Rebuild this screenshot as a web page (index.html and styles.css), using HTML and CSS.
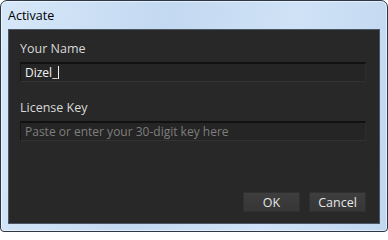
FILE: index.html
```html
<!DOCTYPE html>
<html>
<head>
<meta charset="utf-8">
<title>Activate</title>
<link rel="stylesheet" href="styles.css">
</head>
<body>
<div class="window">
  <div class="titlebar">Activate</div>
  <div class="panel">
    <div class="label">Your Name</div>
    <div class="field"><span class="value">Dizel_</span><span class="caret"></span></div>
    <div class="label label-second">License Key</div>
    <div class="field"><span class="placeholder">Paste or enter your 30-digit key here</span></div>
    <div class="actions">
      <button class="btn">OK</button>
      <button class="btn">Cancel</button>
    </div>
  </div>
</div>
</body>
</html>
```
FILE: styles.css
```css
html, body {
  margin: 0;
  padding: 0;
  background: #ffffff;
}
body {
  font-family: "Open Sans", "Noto Sans", sans-serif;
  font-size: 12px;
}
.window {
  box-sizing: border-box;
  width: 388px;
  height: 232px;
  border: 1px solid #2b3646;
  border-radius: 7px 7px 4px 4px;
  background: linear-gradient(100deg, #d6e7f8 0%, #c3d9f1 40%, #cfe2f6 70%, #c0d7f0 100%);
  box-shadow: inset 0 0 0 1px rgba(255,255,255,0.55);
  display: flex;
  flex-direction: column;
  padding: 0 7px 7px 7px;
}
.titlebar {
  height: 28px;
  display: flex;
  align-items: center;
  color: #000;
  font-size: 12.5px;
}
.panel {
  flex: 1;
  box-sizing: border-box;
  background: #282828;
  border: 1px solid #4a5664;
  display: flex;
  flex-direction: column;
  padding: 11px 13px 11px 11px;
}
.label {
  height: 16px;
  line-height: 16px;
  color: #d8d8d8;
  font-size: 12.5px;
  margin-bottom: 5px;
}
.label-second {
  margin-top: 18px;
}
.field {
  box-sizing: border-box;
  height: 20px;
  background: #252525;
  border-top: 2px solid #111111;
  border-left: 1px solid #151515;
  border-bottom: 1px solid #333333;
  border-right: 1px solid #2c2c2c;
  display: flex;
  align-items: center;
  padding-left: 4px;
  font-size: 12px;
}
.value {
  color: #f2f2f2;
}
.caret {
  width: 1px;
  height: 13px;
  background: #f2f2f2;
  margin-left: 1px;
}
.placeholder {
  color: #7e7e7e;
}
.actions {
  margin-top: auto;
  display: flex;
  justify-content: flex-end;
  gap: 9px;
}
.btn {
  width: 57px;
  height: 20px;
  padding: 0;
  background: linear-gradient(#3e3e3e, #363636);
  border: 1px solid #303030;
  color: #e6e6e6;
  font-family: "Open Sans", "Noto Sans", sans-serif;
  font-size: 12.5px;
}
```
